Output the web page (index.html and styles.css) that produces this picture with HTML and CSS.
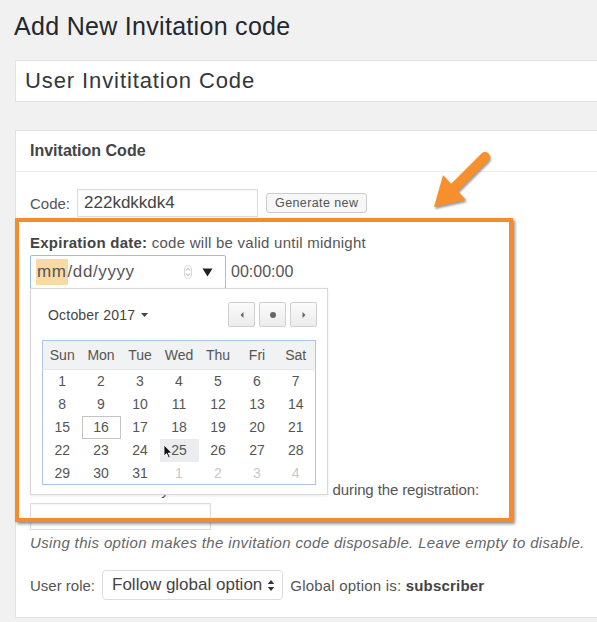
FILE: index.html
```html
<!DOCTYPE html>
<html>
<head>
<meta charset="UTF-8">
<title>Add New Invitation code</title>
<link rel="stylesheet" href="styles.css">
</head>
<body>
<div class="wrap">
  <h1 class="page-title">Add New Invitation code</h1>
  <div class="title-box">User Invititation Code</div>

  <div class="postbox">
    <h2 class="postbox-head">Invitation Code</h2>
    <div class="postbox-body">

      <div class="row code-row">
        <span class="lbl">Code:</span>
        <span class="field code-field">222kdkkdk4</span>
        <span class="btn">Generate new</span>
      </div>

      <p class="label"><b>Expiration date:</b> code will be valid until midnight</p>

      <div class="row date-row">
        <div class="date-input">
          <span class="seg">mm</span>/dd/yyyy
          <svg class="spin" width="8" height="14" viewBox="0 0 8 14"><rect x="0.5" y="0.5" width="7" height="13" rx="3.5" fill="none" stroke="#d8d8d8"/><path d="M2 5.5 L4 3.5 L6 5.5 M2 8.5 L4 10.5 L6 8.5" fill="none" stroke="#9a9a9a" stroke-width="0.9"/></svg>
          <svg class="drop" width="11" height="9" viewBox="0 0 11 9"><path d="M0.5 0.5 L10.5 0.5 L5.5 8.5 Z" fill="#222"/></svg>
        </div>
        <span class="time">00:00:00</span>

        <div class="picker">
          <div class="picker-head">
            <span class="month">October 2017
              <svg width="7" height="4" viewBox="0 0 7 4"><path d="M0 0 L7 0 L3.5 4 Z" fill="#444"/></svg>
            </span>
            <div class="nav">
              <span class="nav-btn"><svg width="6" height="8" viewBox="0 0 6 8"><path d="M4.5 1 L1.5 4 L4.5 7 Z" fill="#666"/></svg></span>
              <span class="nav-btn"><svg width="8" height="8" viewBox="0 0 8 8"><circle cx="4" cy="4" r="3" fill="#666"/></svg></span>
              <span class="nav-btn"><svg width="6" height="8" viewBox="0 0 6 8"><path d="M1.5 1 L4.5 4 L1.5 7 Z" fill="#666"/></svg></span>
            </div>
          </div>
          <table class="cal">
            <thead>
              <tr><th>Sun</th><th>Mon</th><th>Tue</th><th>Wed</th><th>Thu</th><th>Fri</th><th>Sat</th></tr>
            </thead>
            <tbody>
              <tr><td>1</td><td>2</td><td>3</td><td>4</td><td>5</td><td>6</td><td>7</td></tr>
              <tr><td>8</td><td>9</td><td>10</td><td>11</td><td>12</td><td>13</td><td>14</td></tr>
              <tr><td>15</td><td class="today">16</td><td>17</td><td>18</td><td>19</td><td>20</td><td>21</td></tr>
              <tr><td>22</td><td>23</td><td>24</td><td class="hover">25
                <svg class="cursor" width="10" height="15" viewBox="0 0 10 15"><path d="M1 1 L1 12 L3.6 9.6 L5.6 14 L7.2 13.3 L5.3 9 L8.8 9 Z" fill="#111" stroke="#fff" stroke-width="0.8"/></svg>
              </td><td>26</td><td>27</td><td>28</td></tr>
              <tr><td>29</td><td>30</td><td>31</td><td class="next">1</td><td class="next">2</td><td class="next">3</td><td class="next">4</td></tr>
            </tbody>
          </table>
        </div>
      </div>

      <!-- fields hidden behind the open date picker -->
      <div class="covered">
        <span class="field short-field"></span>
        <span class="field short-field"></span>
      </div>

      <p class="label usage">Max uses: how many times code can be used during the registration:</p>
      <div class="row"><span class="field uses-field"></span></div>
      <p class="desc">Using this option makes the invitation code disposable. Leave empty to disable.</p>

      <div class="row role-row">
        <span class="lbl">User role:</span>
        <span class="select">Follow global option
          <svg width="8" height="13" viewBox="0 0 8 13"><path d="M4 1 L7.2 5 L0.8 5 Z M4 12 L7.2 8 L0.8 8 Z" fill="#333"/></svg>
        </span>
        <span class="note">Global option is: <b>subscriber</b></span>
      </div>
    </div>
  </div>

  <div class="highlight"></div>
  <svg class="arrow" width="80" height="80" viewBox="0 0 80 80">
    <line x1="65" y1="17" x2="30" y2="52" stroke="#f7902c" stroke-width="10" stroke-linecap="round"/>
    <polygon points="14,67 23,35 46,60" fill="#f7902c"/>
  </svg>
</div>
</body>
</html>
```

FILE: styles.css
```css
body {
  margin: 0;
  background: #f1f1f1;
  font-family: "Liberation Sans", Arial, sans-serif;
  color: #555;
  overflow: hidden;
}

.wrap {
  position: relative;
  width: 640px;
  padding-left: 15px;
}

.page-title {
  margin: 0 0 0 -1px;
  padding-top: 11px;
  font-size: 25px;
  line-height: 30px;
  font-weight: normal;
  letter-spacing: 0.3px;
  color: #23282d;
}

.title-box {
  margin-top: 19px;
  height: 40px;
  line-height: 40px;
  padding-left: 9px;
  background: #fff;
  border: 1px solid #e2e2e2;
  font-size: 22px;
  letter-spacing: 0.9px;
  color: #32373c;
}

.postbox {
  margin-top: 28px;
  background: #fff;
  border: 1px solid #e2e2e2;
}

.postbox-head {
  margin: 0;
  height: 40px;
  line-height: 40px;
  padding-left: 14px;
  font-size: 16px;
  border-bottom: 1px solid #eee;
  color: #444;
}

.postbox-body {
  padding: 17px 14px 17px 14px;
}

.row {
  display: flex;
  align-items: center;
}

.lbl {
  font-size: 15px;
  margin-right: 7px;
}

.field {
  display: inline-block;
  box-sizing: border-box;
  border: 1px solid #ddd;
  background: #fff;
  box-shadow: inset 0 1px 2px rgba(0,0,0,.05);
}

.code-field {
  width: 181px;
  height: 28px;
  line-height: 26px;
  padding-left: 6px;
  font-size: 17px;
  color: #444;
}

.btn {
  margin-left: 8px;
  height: 20px;
  line-height: 18px;
  box-sizing: border-box;
  padding: 0 8px;
  font-size: 12.5px;
  letter-spacing: 0.4px;
  border: 1px solid #ccc;
  border-radius: 3px;
  background: #f7f7f7;
  color: #555;
}

.label {
  margin: 17px 0 3px 0;
  font-size: 15px;
  letter-spacing: 0.25px;
  line-height: 18px;
}

.label b {
  color: #444;
}

.date-row {
  position: relative;
}

.date-input {
  box-sizing: border-box;
  width: 196px;
  height: 34px;
  border: 1px solid #9cbde6;
  border-radius: 2px;
  display: flex;
  align-items: center;
  padding-left: 5px;
  font-size: 17px;
  letter-spacing: 0.6px;
  color: #555;
}

.seg {
  background: #f9d9a4;
  line-height: 26px;
  padding: 0 1px;
}

.spin {
  margin-left: auto;
  margin-right: 10px;
}

.drop {
  margin-right: 12px;
}

.time {
  margin-left: 5px;
  font-size: 16px;
  color: #555;
}

.picker {
  position: absolute;
  left: 0;
  top: 33px;
  width: 298px;
  height: 207px;
  box-sizing: border-box;
  background: #fff;
  border: 1px solid #d9d9d9;
  box-shadow: 0 1px 3px rgba(0,0,0,.08);
  padding: 13px 10px 0 11px;
  z-index: 2;
}

.picker-head {
  display: flex;
  align-items: center;
  justify-content: space-between;
  padding-left: 6px;
}

.month {
  display: flex;
  align-items: center;
  gap: 6px;
  font-size: 14px;
  letter-spacing: 0.2px;
  color: #444;
}

.nav {
  display: flex;
  gap: 4px;
}

.nav-btn {
  width: 27px;
  height: 25px;
  box-sizing: border-box;
  border: 1px solid #cfcfcf;
  border-radius: 2px;
  background: linear-gradient(#fbfbfb, #ececec);
  display: flex;
  align-items: center;
  justify-content: center;
}

.cal {
  margin-top: 13px;
  width: 274px;
  border: 1px solid #abc4e4;
  border-collapse: collapse;
  table-layout: fixed;
  font-size: 14px;
  color: #555;
}

.cal th {
  height: 26px;
  background: #f1f2f3;
  font-weight: normal;
  border-bottom: 1px solid #e3e6ea;
  color: #555;
}

.cal td {
  height: 23px;
  padding: 0;
  text-align: center;
  box-sizing: border-box;
}

.cal td.today {
  outline: 1px solid #c4c4c4;
  outline-offset: -1px;
}

.cal td.hover {
  background: #eaecef;
  position: relative;
}

.cal td.next {
  color: #c8c8c8;
}

.cursor {
  position: absolute;
  left: 3px;
  top: 5px;
}

.covered {
  height: 167px;
  padding-top: 40px;
  box-sizing: border-box;
  display: flex;
  flex-direction: column;
  gap: 40px;
}

.short-field {
  width: 180px;
  height: 27px;
}

.usage {
  margin-top: 25px;
  letter-spacing: -0.12px;
}

.uses-field {
  width: 181px;
  height: 27px;
  margin-top: 1px;
}

.desc {
  margin: 4px 0 0 0;
  font-size: 15px;
  letter-spacing: 0.35px;
  line-height: 18px;
  font-style: italic;
  color: #666;
}

.role-row {
  margin-top: 18px;
}

.select {
  display: flex;
  align-items: center;
  gap: 5px;
  height: 30px;
  box-sizing: border-box;
  padding: 0 7px 0 9px;
  border: 1px solid #ddd;
  border-radius: 4px;
  font-size: 17px;
  color: #444;
}

.note {
  margin-left: 7px;
  font-size: 15px;
  letter-spacing: 0.2px;
}

.note b {
  color: #444;
}

.highlight {
  position: absolute;
  left: 15px;
  top: 218px;
  width: 498px;
  height: 304px;
  box-sizing: border-box;
  border: 4px solid #f68b2b;
  box-shadow: 2px 2px 3px rgba(0,0,0,.45);
  z-index: 3;
}

.arrow {
  position: absolute;
  left: 420px;
  top: 140px;
  filter: drop-shadow(1px 2px 1px rgba(0,0,0,.4));
  z-index: 3;
}
```
